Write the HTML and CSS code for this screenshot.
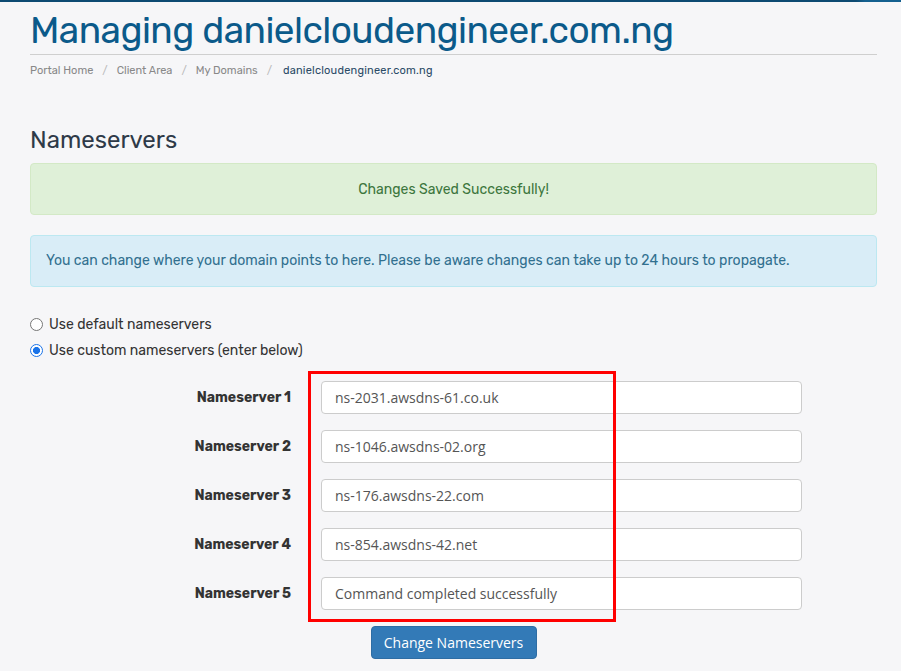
FILE: index.html
```html
<!DOCTYPE html>
<html>
<head>
<meta charset="utf-8">
<link rel="stylesheet" href="styles.css">
</head>
<body>
<div class="topbar"></div>
<main class="page">
  <h1 class="title">Managing danielcloudengineer.com.ng</h1>
  <nav class="crumbs">
    <span class="crumb">Portal Home</span><span class="sep">/</span>
    <span class="crumb">Client Area</span><span class="sep">/</span>
    <span class="crumb">My Domains</span><span class="sep">/</span>
    <span class="crumb active">danielcloudengineer.com.ng</span>
  </nav>
  <h2 class="section">Nameservers</h2>
  <div class="alert success">Changes Saved Successfully!</div>
  <div class="alert info">You can change where your domain points to here. Please be aware changes can take up to 24 hours to propagate.</div>
  <div class="radios">
    <label class="radio"><span class="dot"></span>Use default nameservers</label>
    <label class="radio"><span class="dot on"></span>Use custom nameservers (enter below)</label>
  </div>
  <div class="formwrap">
    <div class="form">
      <div class="lbl">Nameserver 1</div><div class="inp">ns-2031.awsdns-61.co.uk</div>
      <div class="lbl">Nameserver 2</div><div class="inp">ns-1046.awsdns-02.org</div>
      <div class="lbl">Nameserver 3</div><div class="inp">ns-176.awsdns-22.com</div>
      <div class="lbl">Nameserver 4</div><div class="inp">ns-854.awsdns-42.net</div>
      <div class="lbl">Nameserver 5</div><div class="inp">Command completed successfully</div>
    </div>
    <div class="highlight"></div>
  </div>
  <div class="actions"><button class="btn">Change Nameservers</button></div>
</main>
</body>
</html>
```
FILE: styles.css
```css
html, body { margin: 0; padding: 0; }
body {
  background: #f6f6f8;
  font-family: "Rubik", Inter, "Noto Sans", sans-serif;
  color: #333;
  height: 671px;
  overflow: hidden;
}
.topbar {
  height: 2px;
  background: linear-gradient(90deg, #0d4a72 0%, #0d4a72 95%, #14608f 96%, #14608f 100%);
}
.page {
  margin: 0 24px 0 30px;
}
.title {
  margin: 0;
  padding-top: 6px;
  font-weight: 400;
  font-size: 37px;
  line-height: 44px;
  letter-spacing: -0.56px;
  color: #0b5a8a;
  border-bottom: 1px solid #cfcfcf;
  padding-bottom: 2px;
}
.crumbs {
  margin-top: 9px;
  font-size: 11px;
  line-height: 14px;
  color: #888;
  display: flex;
}
.sep { margin: 0 9px; color: #bbb; }
.crumb.active { color: #2a4a66; letter-spacing: 0.2px; margin-left: 2px; }
.section {
  margin: 48px 0 0;
  font-weight: 400;
  font-size: 24px;
  line-height: 28px;
  color: #2e3a48;
}
.alert {
  box-sizing: border-box;
  border-radius: 4px;
  font-size: 14px;
  display: flex;
  align-items: center;
  padding: 0 15px;
}
.success {
  height: 52px;
  margin-top: 9px;
  background: #dff0d8;
  border: 1px solid #d3e9c6;
  color: #3c763d;
  justify-content: center;
}
.info {
  height: 52px;
  margin-top: 20px;
  background: #d9edf7;
  border: 1px solid #bce8f1;
  color: #31708f;
  padding-bottom: 1px;
}
.radios {
  margin-top: 29px;
  display: flex;
  flex-direction: column;
  gap: 9px;
}
.radio {
  display: flex;
  align-items: center;
  font-size: 14px;
  line-height: 17px;
  color: #333;
}
.dot {
  width: 13px;
  height: 13px;
  border: 1px solid #767676;
  border-radius: 50%;
  background: #fff;
  margin-right: 6px;
  box-sizing: border-box;
  flex: none;
}
.dot.on {
  border: 1.5px solid #1a73e8;
  background: radial-gradient(circle, #1a73e8 0 3.3px, #fff 3.8px);
}
.formwrap { position: relative; margin-top: 22px; }
.form {
  display: grid;
  grid-template-columns: 261px 481px;
  column-gap: 30px;
  row-gap: 16px;
  align-items: center;
}
.lbl {
  text-align: right;
  font-weight: 700;
  font-size: 14px;
  color: #333;
}
.inp {
  box-sizing: border-box;
  height: 33px;
  background: #fff;
  border: 1px solid #ccc;
  border-radius: 4px;
  padding: 0 13px;
  display: flex;
  align-items: center;
  font-family: "Open Sans", sans-serif;
  font-size: 14px;
  color: #555;
}
.highlight {
  position: absolute;
  left: 278px;
  top: -10px;
  width: 308px;
  height: 251px;
  box-sizing: border-box;
  border: 3px solid #ff0000;
}
.actions {
  margin-top: 16px;
  display: flex;
  justify-content: center;
}
.btn {
  font-family: "Open Sans", sans-serif;
  font-size: 14px;
  color: #fff;
  background: #337ab7;
  border: 1px solid #2e6da4;
  border-radius: 4px;
  width: 166px;
  height: 33px;
}
```
